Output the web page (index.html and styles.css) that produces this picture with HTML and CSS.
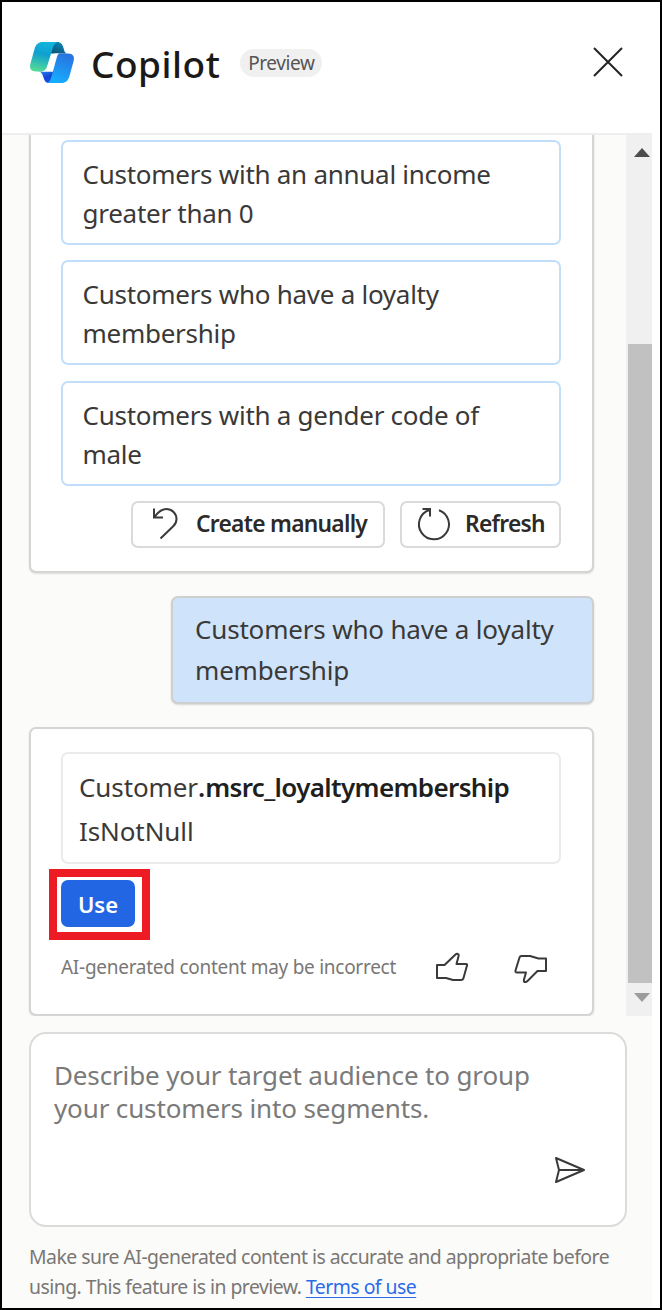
FILE: index.html
```html
<!DOCTYPE html>
<html lang="en">
<head>
<meta charset="utf-8">
<title>Copilot</title>
<link rel="stylesheet" href="styles.css">
</head>
<body>
<div class="frame">
  <header class="header">
    <svg class="logo" viewBox="0 0 44 41" width="44" height="41">
      <defs>
        <linearGradient id="teal" x1="0.5" y1="0" x2="0.3" y2="1"><stop offset="0" stop-color="#14b4dc"/><stop offset=".4" stop-color="#0f9fd0"/><stop offset="1" stop-color="#55dc94"/></linearGradient>
        <linearGradient id="blue" x1="0.7" y1="0" x2="0.4" y2="1"><stop offset="0" stop-color="#2a72dd"/><stop offset="1" stop-color="#16aeff"/></linearGradient>
        <linearGradient id="fold" x1="0" y1="1" x2="0.6" y2="0"><stop offset="0" stop-color="#0c4f72"/><stop offset="1" stop-color="#0b86b4"/></linearGradient>
        <linearGradient id="deep" x1="0" y1="0" x2="0.6" y2="1"><stop offset="0" stop-color="#2390ee"/><stop offset=".6" stop-color="#1544d8"/><stop offset="1" stop-color="#1a50e0"/></linearGradient>
      </defs>
      <path fill="url(#fold)" d="M20 0h7c4 0 5.500 2.500 6.500 6 .8 3 1.500 5.500 4 5.500H20z"/>
      <path fill="url(#deep)" d="M8 29.500h16l-3 11.500h-2c-3.500 0-4.500-2.500-5.500-5.500-1-3-2-6-5.500-6z"/>
      <path fill="#fff" d="M25 11.500h4L23 29.500H12l4-6 3-8z"/>
      <path fill="url(#teal)" d="M12.500 0H29c-4 0-5.500 3.500-6.500 7l-5 16c-1.300 4.500-3 6.500-7.500 6.500H6c-5 0-7-3-5.500-8L4.500 7c1.500-5 4-7 8-7z"/>
      <path fill="url(#blue)" d="M29.500 11.500H38c5 0 7 3 5.500 8L39.500 34c-1.500 5-4 7-8 7H16c3.500 0 4.500-3 5.500-6.500l5-18c.8-3 1.500-5 3-5z"/>
    </svg>
    <h1 class="title">Copilot</h1>
    <span class="badge">Preview</span>
    <svg class="close" viewBox="0 0 32 32" width="32" height="32"><path d="M2 2l28 28M30 2L2 30"/></svg>
  </header>

  <main class="chat">
    <div class="messages">
      <section class="card suggestions">
        <div class="option">Customers with an annual income<br>greater than 0</div>
        <div class="option">Customers who have a loyalty<br>membership</div>
        <div class="option">Customers with a gender code of<br>male</div>
        <div class="actions">
          <button class="action create">
            <svg viewBox="0 0 28 34" width="28" height="34"><path d="M2 1.500v9h9M2.500 10C6 5 10 2 14.500 2 20 2 24.500 6.500 24.500 12c0 3-1 5-3 7L8.500 31.500"/></svg>
            <span>Create manually</span>
          </button>
          <button class="action refresh">
            <svg viewBox="0 0 34 34" width="34" height="34"><path d="M22 3.200A15 15 0 1 1 12.500 3M5.500 2H13v7.500"/></svg>
            <span>Refresh</span>
          </button>
        </div>
      </section>

      <div class="bubble">Customers who have a loyalty<br>membership</div>

      <section class="card result">
        <div class="query"><span>Customer<b class="dot">.</b><b>msrc_loyaltymembership</b></span><br>IsNotNull</div>
        <div class="highlight"><button class="use">Use</button></div>
        <div class="feedback">
          <span class="notice">AI-generated content may be incorrect</span>
          <svg class="thumb-up" viewBox="0 0 34 30" width="34" height="30"><path d="M2 13h7.500L20.500 2.500Q22 1 23.500 2.500Q24 3 23.500 4.500L21.500 12H31Q32.500 12 32 13.500L28.500 26Q28 28 26 28H18L11 26H2z"/></svg>
          <svg class="thumb-down" viewBox="0 0 34 30" width="34" height="30"><path d="M32 4.500H24.500L16 2H7.500Q6 2 5.500 3.500L1.500 16.500Q1 18.500 3 18.500H12L10 25.500Q9.500 28.500 11.500 28Q12.500 28 13.500 27L23.500 17H32z"/></svg>
        </div>
      </section>
    </div>
    <div class="scrollbar">
      <svg viewBox="0 0 16 9" width="16" height="9"><path fill="#4d4d4d" d="M0 9L8 0l8 9z"/></svg>
      <div class="thumb"></div>
      <svg viewBox="0 0 16 9" width="16" height="9"><path fill="#9c9c9c" d="M0 0h16L8 9z"/></svg>
    </div>
  </main>

  <footer class="footer">
    <div class="prompt">
      <p class="placeholder">Describe your target audience to group<br>your customers into segments.</p>
      <svg class="send" viewBox="0 0 32 28" width="32" height="28"><path d="M2 2l28 12L2 26l3-12zM5 14h25"/></svg>
    </div>
    <p class="legal">Make sure AI-generated content is accurate and appropriate before<br>using. This feature is in preview. <a class="terms">Terms of use</a></p>
  </footer>
</div>
</body>
</html>
```
FILE: styles.css
```css
* { box-sizing: border-box; }
body { margin: 0; background: #fff; font-family: "Noto Sans", "Open Sans", sans-serif; color: #3a3938; }
button { font: inherit; color: inherit; margin: 0; }
svg { display: block; flex: none; overflow: visible; }
p, h1 { margin: 0; }
.frame { width: 662px; height: 1310px; border: 2px solid #000; padding-right: 8px; display: flex; flex-direction: column; overflow: hidden; white-space: nowrap; }

.header { height: 133px; flex: none; display: flex; align-items: center; padding: 0 28px 12px 28px; border-bottom: 2px solid #efeeed; }
.logo { margin-top: 2px; }
.title { margin-left: 17px; font-size: 37px; font-weight: 500; line-height: 50px; color: #1b1a19; letter-spacing: .5px; padding-top: 4px; }
.badge { margin-left: 20px; margin-top: 3px; width: 82px; height: 28px; border-radius: 14px; background: #f0f0f0; color: #555; font-size: 19px; line-height: 28px; text-align: center; letter-spacing: -.4px; }
.close { margin-left: auto; }
.close path { stroke: #252423; stroke-width: 2; }

.chat { height: 881px; flex: none; display: flex; background: #fbfbf9; overflow: hidden; }
.messages { width: 624px; padding: 0 32px 0 27px; display: flex; flex-direction: column; height: 881px; justify-content: flex-end; }
.card { background: #fff; border: 2px solid #d5d5d4; border-radius: 7px; box-shadow: 0 1px 2px rgba(0,0,0,.12); flex: none; padding: 0 31px 0 30px; }
.suggestions { padding-top: 20px; height: 455px; }
.option { height: 105px; margin-bottom: 15.300px; padding: 13px 19.500px; border: 2px solid #c1dffb; border-radius: 7px; font-size: 26px; line-height: 39px; letter-spacing: -.27px; }
.actions { display: flex; justify-content: flex-end; gap: 15px; }
.action { height: 47px; border: 2px solid #dadada; border-radius: 7px; background: #fff; display: flex; align-items: center; padding: 0 0 1px; font-size: 22.800px; font-weight: 600; color: #2b2a29; letter-spacing: -.74px; }
.action path { fill: none; stroke: #3b3a39; stroke-width: 2; }
.create { width: 254px; padding-left: 19px; gap: 16px; }
.refresh { width: 161px; padding-left: 15px; gap: 14px; }
.bubble { flex: none; align-self: flex-end; width: 423px; height: 108px; margin: 23px 0; padding: 11px 22px; background: #cfe4fb; border: 2px solid #cdcfd1; border-radius: 7px; box-shadow: 0 1px 2px rgba(0,0,0,.15); font-size: 26px; line-height: 40.500px; letter-spacing: -.18px; }
.result { height: 289px; padding-top: 23px; }
.query { height: 112px; border: 2px solid #ebebeb; border-radius: 7px; padding: 11px 16px; font-size: 26px; line-height: 44px; letter-spacing: -.1px; }
.query b { font-weight: 600; color: #201f1e; letter-spacing: -.64px; }
.query .dot { letter-spacing: 0; }
.highlight { width: 101px; height: 71px; margin: 5px 0 0 -12px; border: 8px solid #ed1c24; padding: 3px 4px; }
.use { display: block; width: 74px; height: 47px; border: 0; border-radius: 7px; background: #2266e3; color: #fff; font-size: 22px; font-weight: 600; padding: 0; }
.feedback { display: flex; align-items: center; height: 53px; }
.notice { width: 374px; font-size: 19px; color: #797775; letter-spacing: -.27px; }
.feedback path, .send path { fill: none; stroke: #3b3a39; stroke-width: 2; stroke-linejoin: round; }
.thumb-down { margin-left: 45px; margin-top: 4px; }

.scrollbar { width: 26px; background: #f0f0f0; padding: 13px 0 0 8px; }
.thumb { width: 24px; height: 639px; margin: 187px 0 10px -6px; background: #c1c1c1; }

.footer { flex: 1; background: #fbfbf9; padding: 16px 25px 0 27px; }
.prompt { height: 195px; border: 2px solid #dbdbda; border-radius: 17px; background: #fff; padding: 25px 39px 0 23px; }
.placeholder { font-size: 26px; line-height: 33px; color: #7a7a7a; letter-spacing: -.14px; }
.send { margin: 31px 0 0 auto; }
.legal { margin-top: 15px; font-size: 19.400px; line-height: 30px; color: #797775; letter-spacing: -.52px; }
.terms { color: #2b6bea; text-decoration: underline; text-underline-offset: 3px; }
```
